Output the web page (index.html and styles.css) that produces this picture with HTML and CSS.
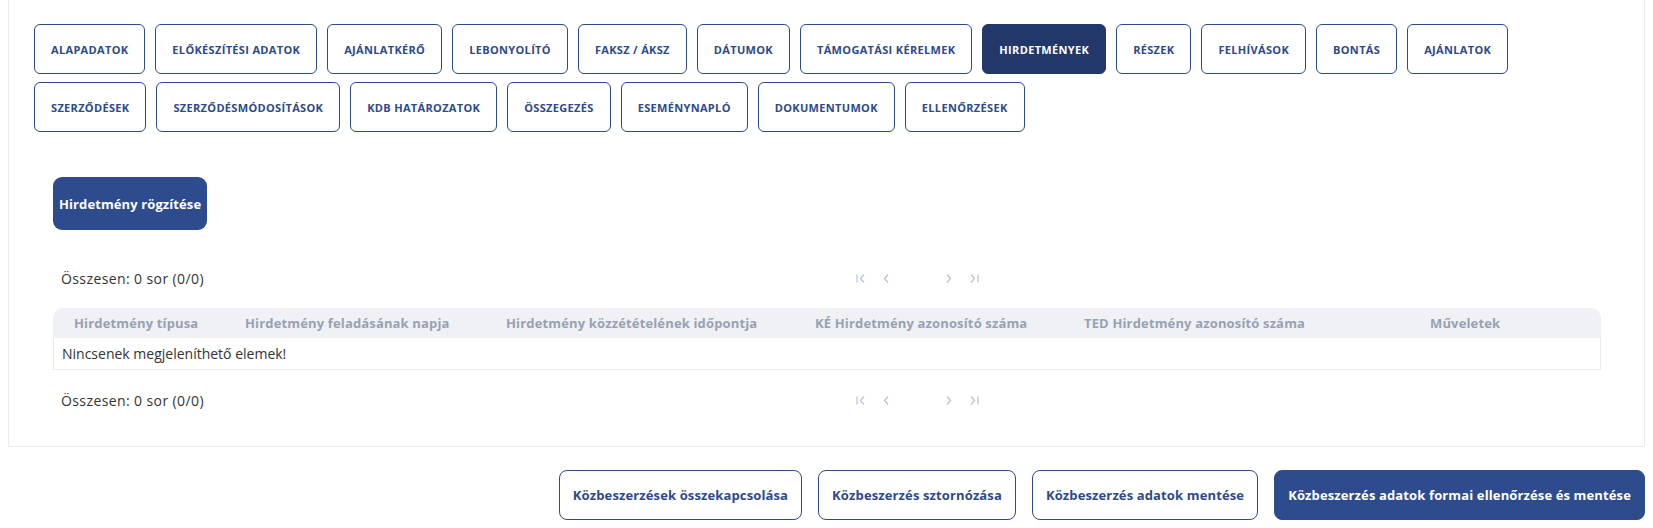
FILE: index.html
```html
<!DOCTYPE html>
<html lang="hu">
<head>
    <meta charset="UTF-8">
    <meta name="viewport" content="width=device-width, initial-scale=1.0">
    <title>Közbeszerzés - Hirdetmények</title>
    <link rel="stylesheet" href="styles.css">
</head>
<body>
    <div class="card">
        <nav class="tabs">
            <button class="tab">Alapadatok</button>
            <button class="tab">Előkészítési adatok</button>
            <button class="tab">Ajánlatkérő</button>
            <button class="tab">Lebonyolító</button>
            <button class="tab">FAKSZ / ÁKSZ</button>
            <button class="tab">Dátumok</button>
            <button class="tab">Támogatási kérelmek</button>
            <button class="tab active">Hirdetmények</button>
            <button class="tab">Részek</button>
            <button class="tab">Felhívások</button>
            <button class="tab">Bontás</button>
            <button class="tab">Ajánlatok</button>
            <button class="tab">Szerződések</button>
            <button class="tab">Szerződésmódosítások</button>
            <button class="tab">KDB határozatok</button>
            <button class="tab">Összegezés</button>
            <button class="tab">Eseménynapló</button>
            <button class="tab">Dokumentumok</button>
            <button class="tab">Ellenőrzések</button>
        </nav>

        <div class="section">
            <button class="btn-add">Hirdetmény rögzítése</button>

            <div class="pager-row">
                <div class="pager-info">Összesen: 0 sor (0/0)</div>
                <div class="pager">
                    <span class="pg"><svg width="10" height="9" viewBox="0 0 10 9"><path d="M1 0.5v8M8 0.5L4.5 4.5L8 8.5" /></svg></span>
                    <span class="pg"><svg width="6" height="9" viewBox="0 0 6 9"><path d="M5 0.5L1.5 4.5L5 8.5" /></svg></span>
                    <span class="pg-gap"></span>
                    <span class="pg"><svg width="6" height="9" viewBox="0 0 6 9"><path d="M1 0.5L4.5 4.5L1 8.5" /></svg></span>
                    <span class="pg"><svg width="10" height="9" viewBox="0 0 10 9"><path d="M9 0.5v8M2 0.5L5.5 4.5L2 8.5" /></svg></span>
                </div>
            </div>

            <table class="grid">
                <colgroup>
                    <col style="width: 171px">
                    <col style="width: 261px">
                    <col style="width: 309px">
                    <col style="width: 269px">
                    <col style="width: 346px">
                    <col style="width: 192px">
                </colgroup>
                <thead>
                    <tr>
                        <th>Hirdetmény típusa</th>
                        <th>Hirdetmény feladásának napja</th>
                        <th>Hirdetmény közzétételének időpontja</th>
                        <th>KÉ Hirdetmény azonosító száma</th>
                        <th>TED Hirdetmény azonosító száma</th>
                        <th>Műveletek</th>
                    </tr>
                </thead>
                <tbody>
                    <tr>
                        <td colspan="6">Nincsenek megjeleníthető elemek!</td>
                    </tr>
                </tbody>
            </table>

            <div class="pager-row bottom">
                <div class="pager-info">Összesen: 0 sor (0/0)</div>
                <div class="pager">
                    <span class="pg"><svg width="10" height="9" viewBox="0 0 10 9"><path d="M1 0.5v8M8 0.5L4.5 4.5L8 8.5" /></svg></span>
                    <span class="pg"><svg width="6" height="9" viewBox="0 0 6 9"><path d="M5 0.5L1.5 4.5L5 8.5" /></svg></span>
                    <span class="pg-gap"></span>
                    <span class="pg"><svg width="6" height="9" viewBox="0 0 6 9"><path d="M1 0.5L4.5 4.5L1 8.5" /></svg></span>
                    <span class="pg"><svg width="10" height="9" viewBox="0 0 10 9"><path d="M9 0.5v8M2 0.5L5.5 4.5L2 8.5" /></svg></span>
                </div>
            </div>
        </div>
    </div>

    <div class="actions">
        <button class="btn-outline">Közbeszerzések összekapcsolása</button>
        <button class="btn-outline">Közbeszerzés sztornózása</button>
        <button class="btn-outline">Közbeszerzés adatok mentése</button>
        <button class="btn-primary">Közbeszerzés adatok formai ellenőrzése és mentése</button>
    </div>
</body>
</html>
```

FILE: styles.css
```css
body {
    margin: 0;
    padding: 0 8px;
    background: #fff;
    font-family: "Open Sans", sans-serif;
    color: #333;
}
button {
    font-family: inherit;
    cursor: pointer;
}
.card {
    background: #fff;
    border: 1px solid #e9ebee;
    border-top: none;
    padding: 24px 25px 31px;
}
.tabs {
    display: flex;
    flex-wrap: wrap;
    gap: 8px 10px;
}
.tab {
    height: 50px;
    padding: 0 16px;
    background: #fff;
    color: #2c4a8c;
    border: 1px solid #2d4a8a;
    border-radius: 6px;
    font-size: 11px;
    font-weight: 700;
    letter-spacing: 0.33px;
    text-transform: uppercase;
}
.tab.active {
    background: #22376a;
    border-color: #22376a;
    color: #fff;
}
.section {
    padding: 0 18px 0 19px;
    margin-top: 45px;
}
.btn-add {
    height: 53px;
    padding: 0 6px;
    background: #2e4b8e;
    color: #fff;
    border: none;
    border-radius: 9px;
    font-size: 13px;
    font-weight: 700;
    letter-spacing: 0.1px;
}
.pager-row {
    display: grid;
    grid-template-columns: 803px auto;
    align-items: center;
    height: 30px;
    margin-top: 33px;
    font-size: 14px;
}
.pager-row.bottom {
    margin-top: 15px;
}
.pager-info {
    padding-left: 8px;
    letter-spacing: 0.4px;
}
.pager {
    display: flex;
    align-items: center;
    gap: 17px;
}
.pg {
    display: flex;
}
.pg svg path {
    fill: none;
    stroke: #b7c1da;
    stroke-width: 1.2;
}
.pg-gap {
    width: 23px;
}
.grid {
    width: 100%;
    margin-top: 15px;
    border-collapse: separate;
    border-spacing: 0;
    table-layout: fixed;
}
.grid th {
    height: 30px;
    padding: 0 0 0 21px;
    background: #eff1f5;
    color: #98a1b4;
    font-size: 13px;
    font-weight: 700;
    letter-spacing: 0.15px;
    text-align: left;
    white-space: nowrap;
}
.grid th:first-child {
    border-top-left-radius: 10px;
}
.grid th:last-child {
    border-top-right-radius: 10px;
}
.grid td {
    height: 31px;
    padding: 0 0 0 8px;
    font-size: 14px;
    border: 1px solid #e9ebee;
    border-top: none;
}
.actions {
    display: flex;
    justify-content: flex-end;
    gap: 16px;
    margin-top: 23px;
}
.btn-outline,
.btn-primary {
    height: 50px;
    padding: 0 13px;
    border-radius: 8px;
    font-size: 13px;
    font-weight: 700;
    letter-spacing: 0.13px;
}
.btn-outline {
    background: #fff;
    color: #2c4a8c;
    border: 1px solid #2d4a8a;
}
.btn-primary {
    background: #2e4b8e;
    color: #fff;
    border: 1px solid #2e4b8e;
}
```
